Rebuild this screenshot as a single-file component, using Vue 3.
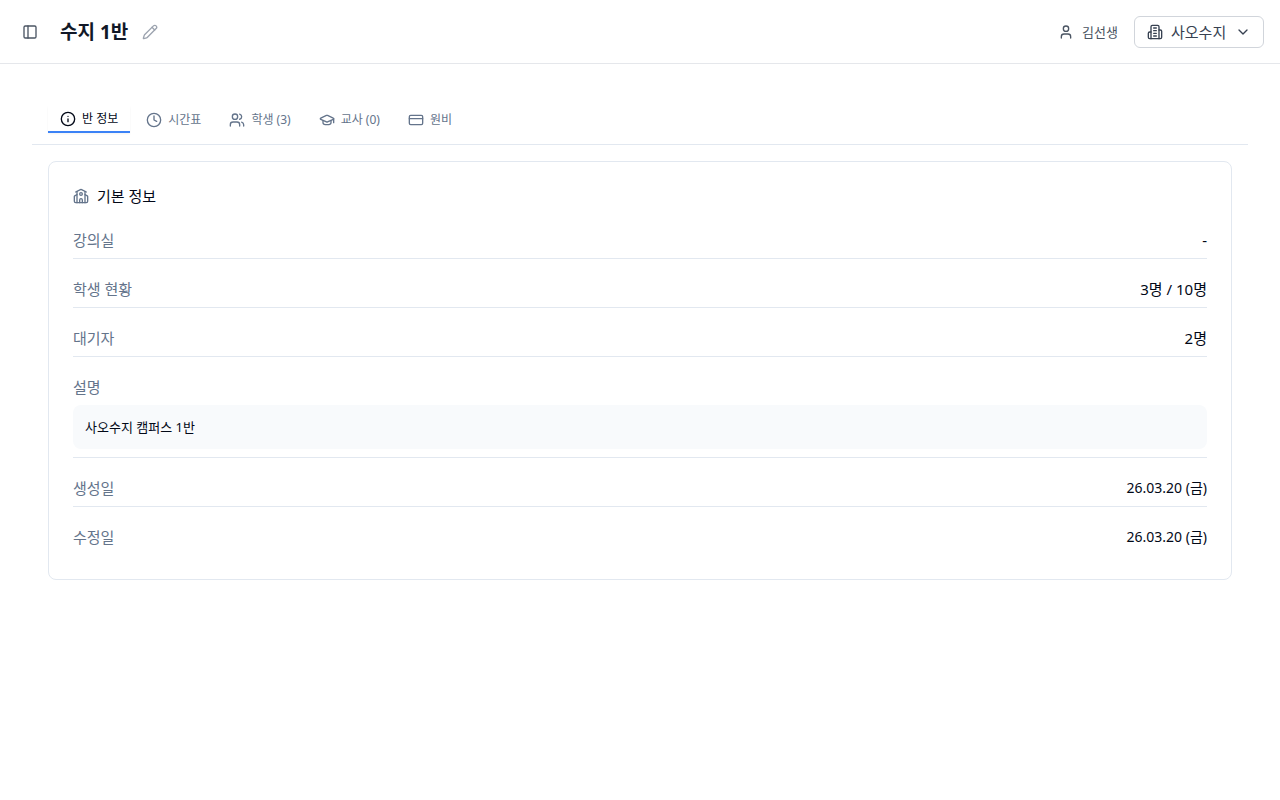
<script setup>
import { ref } from 'vue'

const activeTab = ref('info')
const campus = ref('사오수지')

const tabs = [
  { id: 'info', label: '반 정보', icon: ['M12 2a10 10 0 1 0 0 20a10 10 0 1 0 0-20', 'M12 16v-4', 'M12 8h.01'] },
  { id: 'schedule', label: '시간표', icon: ['M12 2a10 10 0 1 0 0 20a10 10 0 1 0 0-20', 'M12 6v6l4 2'] },
  { id: 'students', label: '학생 (3)', icon: ['M16 21v-2a4 4 0 0 0-4-4H6a4 4 0 0 0-4 4v2', 'M9 3a4 4 0 1 0 0 8a4 4 0 1 0 0-8', 'M22 21v-2a4 4 0 0 0-3-3.87', 'M16 3.13a4 4 0 0 1 0 7.75'] },
  { id: 'teachers', label: '교사 (0)', icon: ['M21.42 10.922a1 1 0 0 0-.019-1.838L12.83 5.18a2 2 0 0 0-1.66 0L2.6 9.08a1 1 0 0 0 0 1.832l8.57 3.908a2 2 0 0 0 1.66 0z', 'M22 10v6', 'M6 12.5V16a6 3 0 0 0 12 0v-3.5'] },
  { id: 'fees', label: '원비', icon: ['M4 5h16a2 2 0 0 1 2 2v10a2 2 0 0 1-2 2H4a2 2 0 0 1-2-2V7a2 2 0 0 1 2-2z', 'M2 10h20'] },
]

const rows = [
  { label: '강의실', value: '-' },
  { label: '학생 현황', value: '3명 / 10명' },
  { label: '대기자', value: '2명' },
  { label: '설명', value: '사오수지 캠퍼스 1반', kind: 'note' },
  { label: '생성일', value: '26.03.20 (금)', kind: 'date' },
  { label: '수정일', value: '26.03.20 (금)', kind: 'date' },
]
</script>

<template>
  <div class="page">
    <header class="topbar">
      <button class="icon-button" type="button" aria-label="사이드바 열기">
        <svg class="icon" viewBox="0 0 24 24"><rect x="3" y="3" width="18" height="18" rx="2" /><path d="M9 3v18" /></svg>
      </button>
      <h1>수지 1반</h1>
      <button class="icon-button edit" type="button" aria-label="이름 수정">
        <svg class="icon" viewBox="0 0 24 24"><path d="M21.174 6.812a1 1 0 0 0-3.986-3.987L3.842 16.174a2 2 0 0 0-.5.83l-1.321 4.352a.5.5 0 0 0 .623.622l4.353-1.32a2 2 0 0 0 .83-.497z" /><path d="m15 5 4 4" /></svg>
      </button>
      <div class="user">
        <svg class="icon" viewBox="0 0 24 24"><path d="M19 21v-2a4 4 0 0 0-4-4H9a4 4 0 0 0-4 4v2" /><circle cx="12" cy="7" r="4" /></svg>
        <span>김선생</span>
      </div>
      <label class="campus">
        <svg class="icon" viewBox="0 0 24 24"><path d="M6 22V4a2 2 0 0 1 2-2h8a2 2 0 0 1 2 2v18Z" /><path d="M6 12H4a2 2 0 0 0-2 2v6a2 2 0 0 0 2 2h2" /><path d="M18 9h2a2 2 0 0 1 2 2v9a2 2 0 0 1-2 2h-2" /><path d="M10 6h4M10 10h4M10 14h4M10 18h4" /></svg>
        <select v-model="campus" aria-label="캠퍼스"><option>사오수지</option></select>
        <svg class="icon" viewBox="0 0 24 24"><path d="m6 9 6 6 6-6" /></svg>
      </label>
    </header>

    <main>
      <div class="tabs" role="tablist">
        <button
          v-for="tab in tabs"
          :key="tab.id"
          type="button"
          role="tab"
          class="tab"
          :class="{ active: tab.id === activeTab }"
          :aria-selected="tab.id === activeTab"
          @click="activeTab = tab.id"
        >
          <svg class="icon" viewBox="0 0 24 24"><path v-for="d in tab.icon" :key="d" :d="d" /></svg>
          <span>{{ tab.label }}</span>
        </button>
      </div>

      <section class="card">
        <h2>
          <svg class="icon" viewBox="0 0 24 24"><path d="M14 22v-4a2 2 0 1 0-4 0v4" /><path d="m18 10 3.447 1.724a1 1 0 0 1 .553.894V20a2 2 0 0 1-2 2H4a2 2 0 0 1-2-2v-7.382a1 1 0 0 1 .553-.894L6 10" /><path d="M18 5v17" /><path d="m4 6 7.106-3.553a2 2 0 0 1 1.788 0L20 6" /><path d="M6 5v17" /><circle cx="12" cy="9" r="2" /></svg>
          <span>기본 정보</span>
        </h2>
        <dl>
          <div v-for="row in rows" :key="row.label" class="row" :class="{ stacked: row.kind === 'note' }">
            <dt>{{ row.label }}</dt>
            <dd :class="row.kind">{{ row.value }}</dd>
          </div>
        </dl>
      </section>
    </main>
  </div>
</template>

<style>
body {
  margin: 0;
  background: #fff;
}
</style>

<style scoped>
.page {
  min-height: 100vh;
  color: #020817;
  font-family: "Noto Sans", "Noto Sans CJK KR", sans-serif;
  font-size: 15px;
  font-weight: 400;
  line-height: 20px;
}
button,
select {
  margin: 0;
  padding: 0;
  border: 0;
  background: none;
  color: inherit;
  font: inherit;
  cursor: pointer;
}
.icon {
  display: block;
  flex: none;
  width: 16px;
  height: 16px;
  fill: none;
  stroke: currentColor;
  stroke-width: 2;
  stroke-linecap: round;
  stroke-linejoin: round;
}
.topbar {
  display: flex;
  align-items: center;
  box-sizing: border-box;
  height: 64px;
  padding: 0 16px;
  border-bottom: 1px solid #e5e7eb;
  color: #4b5563;
}
.icon-button {
  display: grid;
  place-items: center;
  width: 28px;
  height: 28px;
}
h1 {
  margin: 0 8px 0 16px;
  color: #111827;
  font-size: 19px;
  font-weight: 700;
  line-height: 28px;
}
.edit {
  color: #9ca3af;
}
.user {
  display: flex;
  align-items: center;
  gap: 8px;
  margin-left: auto;
  font-size: 13px;
}
.campus {
  display: flex;
  align-items: center;
  gap: 8px;
  box-sizing: border-box;
  height: 32px;
  margin-left: 16px;
  padding: 0 12px;
  border: 1px solid #d1d5db;
  border-radius: 6px;
  color: #374151;
}
.campus select {
  appearance: none;
}
main {
  padding: 32px;
}
.tabs {
  display: flex;
  gap: 4px;
  padding: 10px 16px 11px;
  border-bottom: 1px solid #e2e8f0;
}
.tab {
  display: flex;
  align-items: center;
  gap: 6px;
  box-sizing: border-box;
  height: 27px;
  padding: 0 12px;
  color: #64748b;
  font-size: 12px;
  line-height: 16px;
}
.tab.active {
  border-bottom: 2px solid #3b82f6;
  box-shadow: 0 1px 2px rgba(0, 0, 0, 0.05);
  color: #020817;
}
.card {
  margin: 16px 16px 0;
  padding: 24px;
  border: 1px solid #e2e8f0;
  border-radius: 8px;
}
h2 {
  display: flex;
  align-items: center;
  gap: 8px;
  margin: 0 0 24px;
  font-size: 15px;
  font-weight: 400;
}
h2 .icon {
  color: #64748b;
}
dl {
  display: flex;
  flex-direction: column;
  gap: 20px;
  margin: 0;
}
.row {
  display: flex;
  justify-content: space-between;
  padding-bottom: 8px;
  border-bottom: 1px solid #e2e8f0;
}
.row:last-child {
  border-bottom: 0;
}
.row.stacked {
  flex-direction: column;
  gap: 8px;
}
dt {
  color: #64748b;
}
dd {
  margin: 0;
}
.date {
  font-size: 14px;
}
.note {
  padding: 12px;
  border-radius: 8px;
  background: #f8fafc;
  font-size: 13px;
}
</style>
